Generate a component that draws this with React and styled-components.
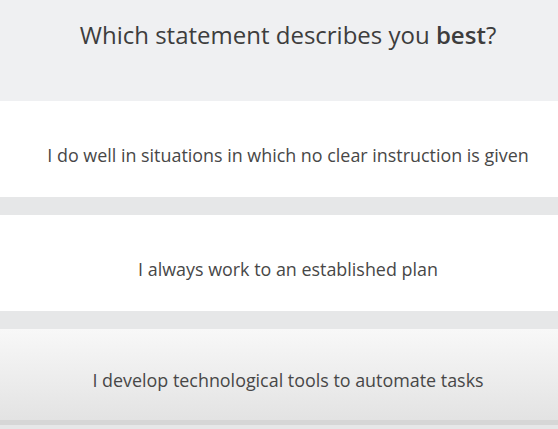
import React from 'react'
import styled, { createGlobalStyle } from 'styled-components'

const GlobalStyle = createGlobalStyle`
  html, body {
    margin: 0;
    padding: 0;
    background: #e6e7e8;
  }
  body {
    font-family: 'Open Sans', 'Liberation Sans', sans-serif;
  }
`

const Page = styled.div`
  width: 558px;
  height: 429px;
  overflow: hidden;
  background: #e6e7e8;
  display: flex;
  flex-direction: column;
`

const Header = styled.div`
  height: 101px;
  background: #eff0f2;
  display: flex;
  justify-content: center;
  padding: 17px 0 0 18px;
  box-sizing: border-box;

  h1 {
    margin: 0;
    font-size: 24px;
    font-weight: 400;
    color: #3d3d3d;
    line-height: 36px;
  }
  b {
    font-weight: 600;
  }
`

const Options = styled.div`
  display: flex;
  flex-direction: column;
  gap: 18px;
`

const Option = styled.button`
  all: unset;
  height: 96px;
  box-sizing: border-box;
  padding: 11px 0 0 18px;
  display: flex;
  align-items: center;
  justify-content: center;
  font-family: 'Open Sans', 'Liberation Sans', sans-serif;
  font-size: 17.9px;
  color: #474747;
  cursor: pointer;
  background: ${({ $active }) =>
    $active ? 'linear-gradient(#f8f8f8, #e3e3e3)' : '#ffffff'};
  border-bottom: ${({ $active }) => ($active ? '5px solid #d6d6d6' : 'none')};
`

const options = [
  'I do well in situations in which no clear instruction is given',
  'I always work to an established plan',
  'I develop technological tools to automate tasks',
]

export default function App() {
  return (
    <Page>
      <GlobalStyle />
      <Header>
        <h1>Which statement describes you <b>best</b>?</h1>
      </Header>
      <Options>
        {options.map((text, i) => (
          <Option key={i} $active={i === 2}>
            {text}
          </Option>
        ))}
      </Options>
    </Page>
  )
}
